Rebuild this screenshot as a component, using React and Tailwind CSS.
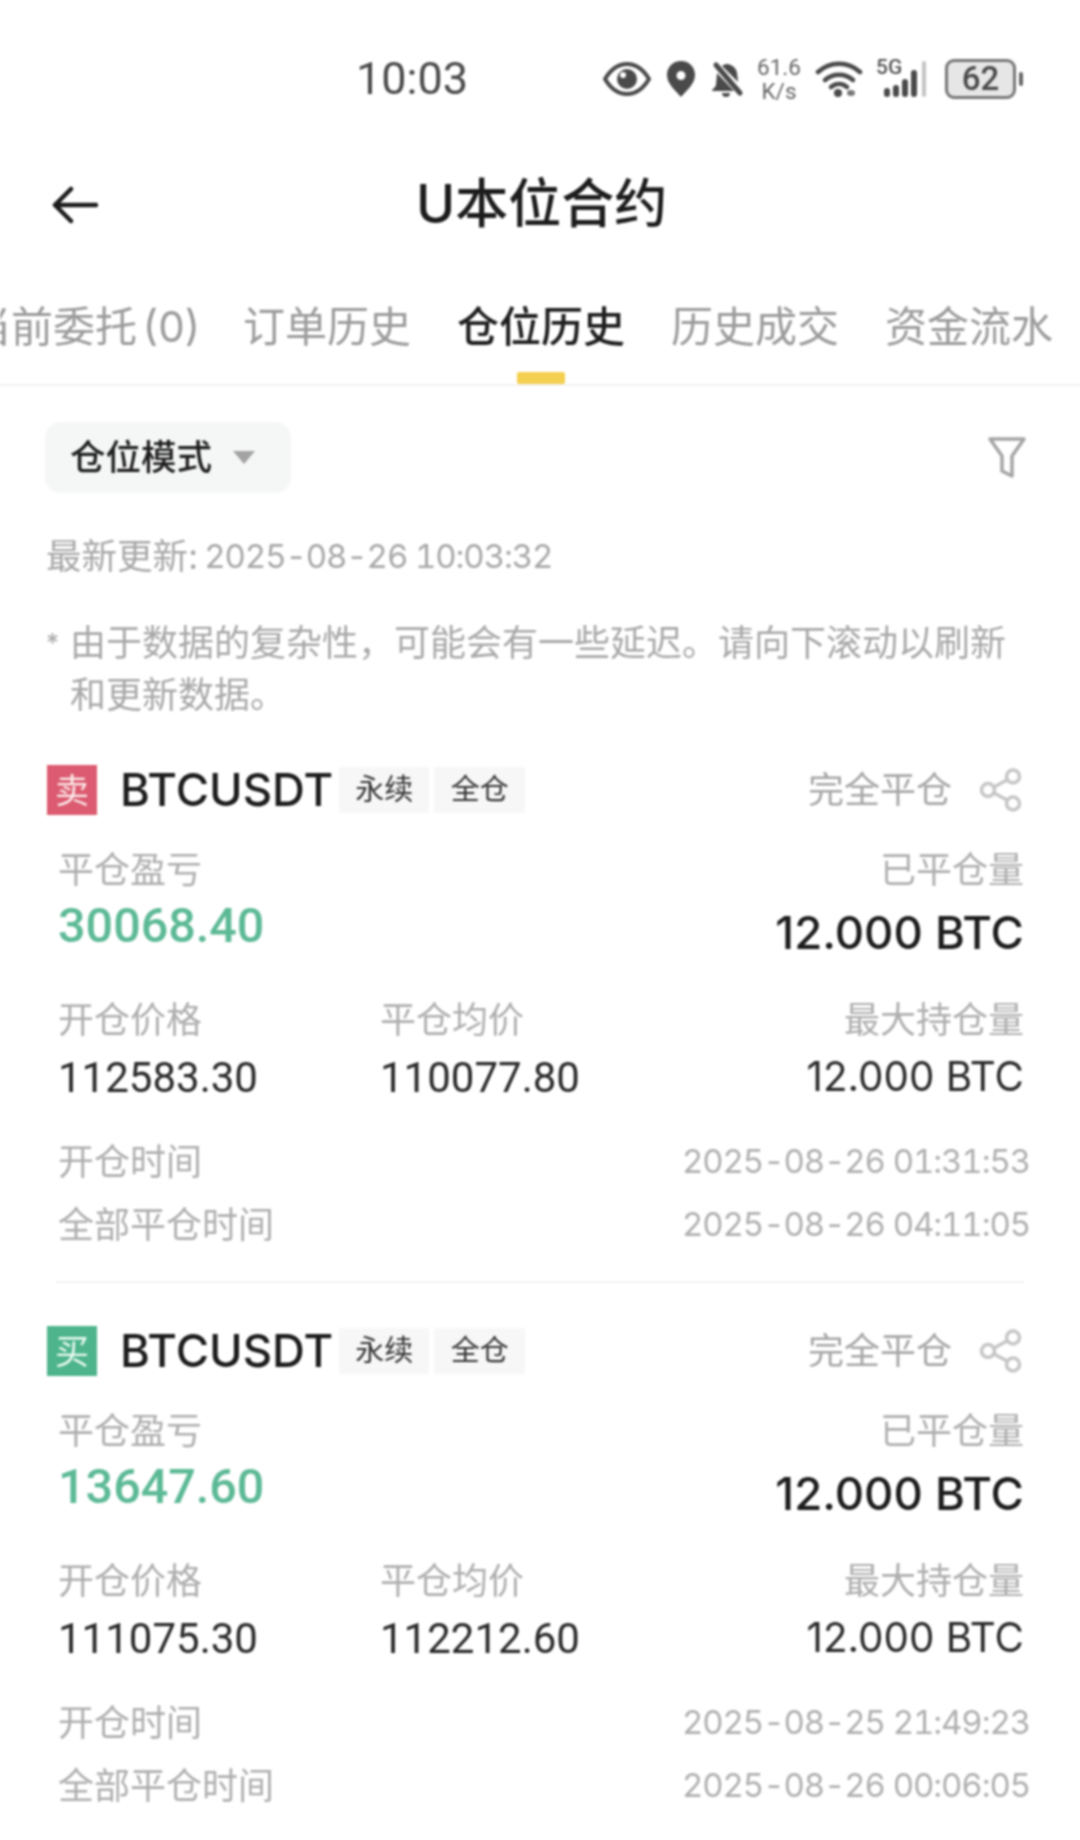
const cjk = { fontFamily: '"Inter", "Noto Sans CJK SC", sans-serif' };
const num = { fontFamily: 'Roboto, "Noto Sans CJK SC", sans-serif' };

function StatusIcons() {
  return (
    <div className="flex items-center text-[#4a4a4a]">
      <svg width="48" height="36" viewBox="0 0 48 36">
        <path d="M2 18C8 8 15 3 24 3s16 5 22 15c-6 10-13 15-22 15S8 28 2 18Z" fill="none" stroke="#4a4a4a" strokeWidth="4" />
        <circle cx="24" cy="18" r="10" fill="#4a4a4a" />
        <circle cx="20" cy="14" r="3" fill="#fff" />
      </svg>
      <svg width="30" height="38" viewBox="0 0 30 38" className="ml-[15px]">
        <path fillRule="evenodd" d="M15 1C7 1 1 7 1 15c0 9 9 16 14 22 5-6 14-13 14-22C29 7 23 1 15 1Zm0 10a4.500 4.500 0 1 1 0 9 4.500 4.500 0 0 1 0-9Z" fill="#4a4a4a" />
      </svg>
      <svg width="36" height="38" viewBox="0 0 36 38" className="ml-[13px]">
        <path d="M7 5 31 33" stroke="#4a4a4a" strokeWidth="5" strokeLinecap="round" />
        <path d="M18 4c2 0 9 2 10 9l1 9L13 6c1-1 3-2 5-2ZM8 13 25 31H3c0-2 3-3 4-6Z" fill="#4a4a4a" />
        <path d="M13 33h8c0 3-2 4-4 4s-4-1-4-4Z" fill="#4a4a4a" />
      </svg>
      <div className="ml-[11px] w-[46px] flex flex-col items-center text-[22.500px] leading-[24px] text-[#666]" style={num}>
        <span>61.6</span>
        <span>K/s</span>
      </div>
      <svg width="48" height="38" viewBox="0 0 48 38" className="ml-[13px]">
        <g fill="none" stroke="#4a4a4a" strokeWidth="4.500" strokeLinecap="round">
          <path d="M3 12C15 1 33 1 45 12" />
          <path d="M10 20c8-7 20-7 28 0" />
          <path d="M16 27c5-4 11-4 16 0" />
        </g>
        <circle cx="23" cy="33" r="4" fill="#4a4a4a" />
        <ellipse cx="36" cy="33" rx="4" ry="3" fill="#777" />
      </svg>
      <div className="ml-[13px] relative w-[55px] h-[40px]">
        <span className="absolute left-0 top-[-2px] text-[21px] leading-[20px] font-medium text-[#555]" style={num}>5G</span>
        <svg width="55" height="40" viewBox="0 0 55 40" className="absolute left-0 top-0">
          <rect x="8" y="29" width="6" height="9" rx="3" fill="#4a4a4a" />
          <rect x="17" y="26" width="6" height="12" rx="3" fill="#4a4a4a" />
          <rect x="26" y="20" width="6" height="18" rx="3" fill="#4a4a4a" />
          <rect x="35" y="11" width="6" height="27" rx="3" fill="#4a4a4a" />
          <rect x="46" y="2" width="4" height="36" rx="2" fill="#c4c4c4" />
        </svg>
      </div>
      <div className="ml-[14px] w-[71px] h-[40px] rounded-[9px] border-[3px] border-[#777] bg-[#e6e6e6] flex items-center justify-center text-[33px] font-medium text-[#4a4a4a]" style={num}>
        62
      </div>
      <div className="ml-[3px] w-[4px] h-[14px] rounded-full bg-[#666]" />
    </div>
  );
}

function Tab({ children, active }) {
  return (
    <div className={active ? 'relative h-full flex items-center shrink-0 text-[#1e1e1e] font-medium' : 'h-full flex items-center shrink-0 text-[#9b9b9b]'}>
      {children}
      {active && <div className="absolute left-[60px] bottom-0 w-[48px] h-[12px] rounded-[2px] bg-[#f5cf4f]" />}
    </div>
  );
}

function Share() {
  return (
    <svg width="44" height="44" viewBox="0 0 44 44" fill="none" stroke="#c6c6c6" strokeWidth="3.500">
      <circle cx="9" cy="22" r="6.500" />
      <circle cx="34" cy="8.500" r="6.500" />
      <circle cx="34" cy="35.500" r="6.500" />
      <path d="m15 19 13-7M15 25l13 7" />
    </svg>
  );
}

function Card({ side, pnl, open, close, t1, t2, last }) {
  const sell = side === '卖';
  return (
    <div>
      <div className="flex items-center h-[50px] pl-[47px] pr-[57px]">
        <div className={sell ? 'w-[50px] h-[50px] bg-[#dc5b70] text-[#fbeaea] text-[34px] flex items-center justify-center' : 'w-[50px] h-[50px] bg-[#4eb48c] text-[#eafaf3] text-[34px] flex items-center justify-center'}>{side}</div>
        <span className="ml-[23px] text-[45.500px] font-medium text-[#1c1c1c] leading-none">BTCUSDT</span>
        <span className="ml-[6px] w-[90px] h-[46px] bg-[#f7f7f7] flex items-center justify-center text-[29px] text-[#333]">永续</span>
        <span className="ml-[5px] w-[91px] h-[46px] bg-[#f7f7f7] flex items-center justify-center text-[29px] text-[#333]">全仓</span>
        <span className="ml-auto text-[36px] text-[#a6a6a6]">完全平仓</span>
        <div className="ml-[27px] w-[44px]"><Share /></div>
      </div>

      <div className="flex justify-between pl-[58px] pr-[56px] mt-[33px]">
        <div>
          <div className="h-[44px] flex items-center text-[36px] text-[#aeaeae]">平仓盈亏</div>
          <div className="h-[56px] mt-[6px] flex items-center text-[48.500px] font-medium text-[#5cb996]" style={num}>{pnl}</div>
        </div>
        <div className="text-right">
          <div className="h-[44px] flex items-center justify-end text-[36px] text-[#aeaeae]">已平仓量</div>
          <div className="h-[56px] mt-[13px] flex items-center justify-end text-[45.500px] font-medium text-[#1c1c1c]">12.000 BTC</div>
        </div>
      </div>

      <div className="grid grid-cols-[322px_1fr_auto] pl-[58px] pr-[56px] mt-[37px]">
        <div className="h-[44px] flex items-center text-[36px] text-[#aeaeae]">开仓价格</div>
        <div className="h-[44px] flex items-center text-[36px] text-[#aeaeae]">平仓均价</div>
        <div className="h-[44px] flex items-center justify-end text-[36px] text-[#aeaeae]">最大持仓量</div>
        <div className="h-[50px] mt-[10px] flex items-center text-[42px] text-[#2a2a2a]" style={num}>{open}</div>
        <div className="h-[50px] mt-[10px] flex items-center text-[42px] text-[#2a2a2a]" style={num}>{close}</div>
        <div className="h-[50px] mt-[10px] flex items-center justify-end text-[40.300px] text-[#2a2a2a]">12.000 BTC</div>
      </div>

      <div className="flex justify-between items-center h-[44px] pl-[58px] pr-[50px] mt-[38px]">
        <span className="text-[36px] text-[#aeaeae]">开仓时间</span>
        <span className="text-[33px] tabular-nums tracking-[-1.100px] text-[#b0b0b0]">{t1}</span>
      </div>
      <div className="flex justify-between items-center h-[44px] pl-[58px] pr-[50px] mt-[19px]">
        <span className="text-[36px] text-[#aeaeae]">全部平仓时间</span>
        <span className="text-[33px] tabular-nums tracking-[-1.100px] text-[#b0b0b0]">{t2}</span>
      </div>
      {!last && <div className="h-[2px] ml-[56px] mr-[56px] mt-[34px] mb-[43px] bg-[#f2f2f2]" />}
    </div>
  );
}

export default function App() {
  return (
    <div className="w-[1080px] h-[1840px] overflow-hidden bg-white blur-[0.8px]" style={cjk}>
      <div className="h-[158px] flex items-center pl-[356px] pr-[57px]">
        <span className="text-[45px] text-[#4a4a4a]" style={num}>10:03</span>
        <div className="ml-auto"><StatusIcons /></div>
      </div>

      <div className="h-[94px] flex items-center relative pl-[52px]">
        <svg width="46" height="38" viewBox="0 0 46 38" fill="none" stroke="#1c1c1c" strokeWidth="4.500" strokeLinecap="round" strokeLinejoin="round">
          <path d="M44 19H3M19 3 3 19l16 16" />
        </svg>
        <span className="ml-[318px] text-[53px] font-medium text-[#1c1c1c]">U本位合约</span>
      </div>

      <div className="h-[134px] pt-[16px] border-b-2 border-[#f2f2f2]">
        <div className="h-full flex gap-[46px] -ml-[31px] text-[42px]">
          <div className="-mr-[3px] [word-spacing:-6px] shrink-0 h-full"><Tab>当前委托 (0)</Tab></div>
          <Tab>订单历史</Tab>
          <Tab active>仓位历史</Tab>
          <Tab>历史成交</Tab>
          <Tab>资金流水</Tab>
        </div>
      </div>

      <div className="flex items-center justify-between mt-[36px] pl-[45px] pr-[53px]">
        <div className="h-[71px] w-[246px] rounded-[16px] bg-[#f5f6f6] flex items-center pl-[25px]">
          <span className="text-[35.500px] font-medium text-[#1e1e1e]">仓位模式</span>
          <span className="ml-[21px] w-0 h-0 border-l-[11px] border-r-[11px] border-t-[13px] border-l-transparent border-r-transparent border-t-[#a3a3a3]" />
        </div>
        <svg width="40" height="44" viewBox="0 0 40 44" fill="none" stroke="#a5a5a5" strokeWidth="3.500" strokeLinejoin="round">
          <path d="M3 3h34L25 20v20l-10-5V20L3 3Z" />
        </svg>
      </div>

      <div className="mt-[42px] h-[44px] pl-[46px] flex items-center gap-[6px] text-[#a8a8a8]">
        <span className="text-[35.500px]">最新更新:</span>
        <span className="text-[33px] tabular-nums tracking-[-1.100px]">2025-08-26 10:03:32</span>
      </div>

      <div className="mt-[38px] flex pl-[46px] pr-[56px] text-[36px] leading-[52px] text-[#a8a8a8]">
        <span className="w-[24px] shrink-0 text-[26px]">*</span>
        <p>由于数据的复杂性，可能会有一些延迟。请向下滚动以刷新和更新数据。</p>
      </div>

      <div className="mt-[44px]">
        <Card side="卖" pnl="30068.40" open="112583.30" close="110077.80" t1="2025-08-26 01:31:53" t2="2025-08-26 04:11:05" />
        <Card side="买" pnl="13647.60" open="111075.30" close="112212.60" t1="2025-08-25 21:49:23" t2="2025-08-26 00:06:05" last />
      </div>
    </div>
  );
}
